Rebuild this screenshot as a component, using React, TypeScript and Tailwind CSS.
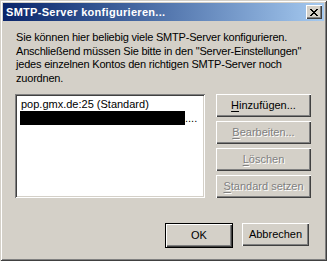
import React from 'react';

const face = 'bg-[#d4d0c8]';
const raised = 'shadow-[inset_1px_1px_0_#ffffff,inset_-1px_-1px_0_#404040,inset_-2px_-2px_0_#808080]';

const Btn: React.FC<{ label: string; ul: string; rest: string; disabled?: boolean; cls?: string }> = ({ label, ul, rest, disabled, cls }) => (
  <button
    aria-label={label}
    className={`${face} ${raised} h-[23px] flex items-center justify-center text-[11px] ${
      disabled ? 'text-[#808080] [text-shadow:1px_1px_0_#ffffff]' : 'text-black'
    } ${cls ?? ''}`}
  >
    <span>
      <span className="underline underline-offset-2">{ul}</span>
      {rest}
    </span>
  </button>
);

export default function App() {
  return (
    <div className="w-[327px] h-[261px] font-['Liberation_Sans',Arial,sans-serif]">
      <div
        className={`w-[327px] h-[261px] ${face} p-[3px] flex flex-col shadow-[inset_1px_1px_0_#d4d0c8,inset_-1px_-1px_0_#404040,inset_2px_2px_0_#ffffff,inset_-2px_-2px_0_#808080]`}
      >
        {/* Title bar */}
        <div className="h-[18px] flex items-center justify-between pl-[3px] pr-[2px] bg-gradient-to-r from-[#0a246a] to-[#a6caf0]">
          <span className="text-white font-bold text-[11px] leading-none tracking-[0.3px]">SMTP-Server konfigurieren...</span>
          <div className={`${face} ${raised} w-[16px] h-[14px] flex items-center justify-center`}>
            <svg width="8" height="7" viewBox="0 0 8 7" shapeRendering="crispEdges">
              <path d="M0 0h2v1H0zM6 0h2v1H6zM1 1h2v1H1zM5 1h2v1H5zM2 2h4v1H2zM3 3h2v1H3zM2 4h4v1H2zM1 5h2v1H1zM5 5h2v1H5zM0 6h2v1H0zM6 6h2v1H6z" fill="#000" />
            </svg>
          </div>
        </div>

        {/* Body */}
        <div className="flex-1 flex flex-col px-[12px] pt-[10px] text-[11px] text-black">
          <p className="leading-[13.5px] pl-[1px] whitespace-nowrap tracking-[-0.2px]">
            Sie können hier beliebig viele SMTP-Server konfigurieren.
            <br />
            Anschließend müssen Sie bitte in den "Server-Einstellungen"
            <br />
            jedes einzelnen Kontos den richtigen SMTP-Server noch
            <br />
            zuordnen.
          </p>

          <div className="flex gap-[11px] mt-[9px]">
            <div className="w-[190px] h-[104px] bg-white p-[2px] shadow-[inset_1px_1px_0_#808080,inset_-1px_-1px_0_#ffffff,inset_2px_2px_0_#404040,inset_-2px_-2px_0_#d4d0c8]">
              <div className="pl-[4px] pt-[2px] leading-[13px]">pop.gmx.de:25 (Standard)</div>
              <div className="flex items-center pl-[3px] h-[14px]">
                <div className="w-[165px] h-[14px] bg-black" />
                <span className="leading-none">....</span>
              </div>
            </div>
            <div className="flex flex-col gap-[4px] w-[95px]">
              <Btn label="Hinzufügen..." ul="H" rest="inzufügen..." />
              <Btn label="Bearbeiten..." ul="B" rest="earbeiten..." disabled />
              <Btn label="Löschen" ul="L" rest="öschen" disabled />
              <Btn label="Standard setzen" ul="S" rest="tandard setzen" disabled />
            </div>
          </div>

          <div className="flex justify-end gap-[9px] mt-[25px] pr-[3px]">
            <div className="border border-black">
              <Btn label="OK" ul="" rest="OK" cls="w-[66px] h-[21px]" />
            </div>
            <Btn label="Abbrechen" ul="" rest="Abbrechen" cls="w-[67px]" />
          </div>
        </div>
      </div>
    </div>
  );
}
